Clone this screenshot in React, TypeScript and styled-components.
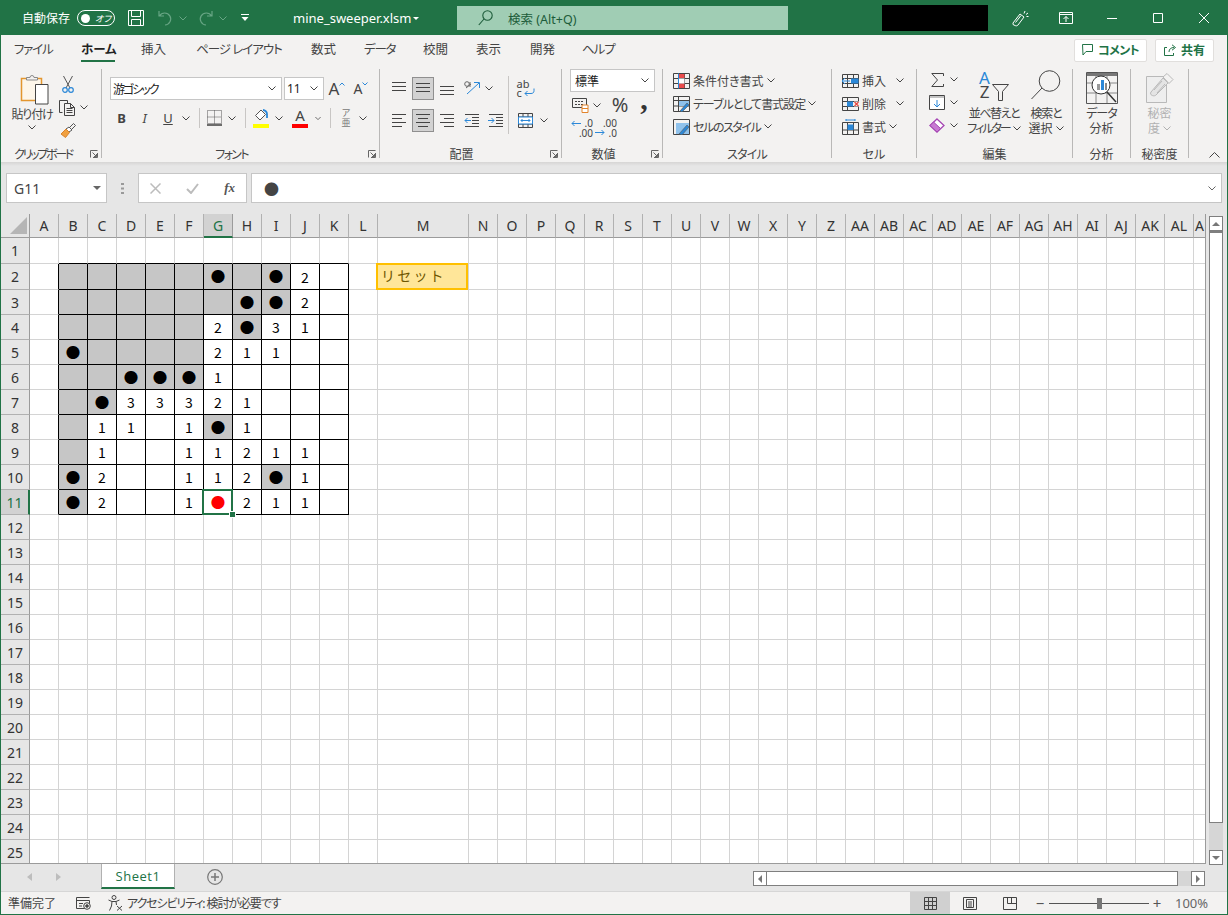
import React from "react";
import styled, { createGlobalStyle } from "styled-components";

const GREEN = "#217346";
const UI = `"Noto Sans", "Noto Sans CJK JP", sans-serif`;
const CELL = `"Noto Sans CJK JP", sans-serif`;
const BLUE = "#2b88d8";

const GlobalStyle = createGlobalStyle`
  html, body { margin: 0; padding: 0; background: #fff; overflow: hidden; }
  body { font-family: ${UI}; font-feature-settings: "palt"; color: #333; }
  * { box-sizing: border-box; }
`;

const Window = styled.div`
  width: 1228px;
  height: 915px;
  border: 1px solid ${GREEN};
  display: flex;
  flex-direction: column;
  overflow: hidden;
  background: #f3f2f1;
`;

// kana in the reference runs narrower than Noto's, this pulls a label in
const Tight = styled.span<{ $s: number }>`
  letter-spacing: ${(p) => p.$s}px;
  white-space: nowrap;
`;

/* ---------- title bar ---------- */
const TitleBar = styled.header`
  height: 34px;
  flex: none;
  background: ${GREEN};
  display: flex;
  align-items: center;
  color: #fff;
`;
const TitleItem = styled.div<{ $ml: number }>`
  margin-left: ${(p) => p.$ml}px;
  display: flex;
  align-items: center;
  flex: none;
  font-size: 12px;
  white-space: nowrap;
`;
const FileName = styled.div`
  margin-left: 44px;
  width: 118px;
  flex: none;
  font-size: 13px;
  white-space: nowrap;
`;
const Toggle = styled.div`
  width: 38px;
  height: 16px;
  border: 1px solid #fff;
  border-radius: 8px;
  display: flex;
  align-items: center;
  padding: 0 3px;
  gap: 5px;
  font-size: 9px;
  font-style: italic;
`;
const ToggleDot = styled.span`
  width: 9px;
  height: 9px;
  border-radius: 50%;
  background: #fff;
`;
const SearchBox = styled.div`
  margin-left: 38px;
  width: 331px;
  height: 24px;
  background: #a0cdb4;
  color: #1d5c3a;
  font-size: 12.5px;
  display: flex;
  align-items: center;
  padding-left: 21px;
  gap: 15px;
  flex: none;
`;
const BlackBox = styled.div`
  margin-left: 94px;
  width: 106px;
  height: 26px;
  background: #000;
  flex: none;
`;

/* ---------- tabs ---------- */
const TabBar = styled.nav`
  height: 33px;
  flex: none;
  display: flex;
  align-items: center;
  padding: 0 13px 3px;
  position: relative;
`;
const Tab = styled.div<{ $w: number; $on?: boolean; $ls: number }>`
  width: ${(p) => p.$w}px;
  flex: none;
  font-size: 12.5px;
  line-height: 18px;
  letter-spacing: ${(p) => p.$ls}px;
  white-space: nowrap;
  color: ${(p) => (p.$on ? "#222" : "#444")};
  font-weight: ${(p) => (p.$on ? 700 : 400)};
  position: relative;
`;
const TabLine = styled.span`
  position: absolute;
  left: 0;
  top: 19px;
  width: 34px;
  height: 2px;
  background: ${GREEN};
`;
const TabButtons = styled.div`
  margin-left: auto;
  display: flex;
  gap: 8px;
`;
const TabButton = styled.div<{ $w: number }>`
  width: ${(p) => p.$w}px;
  height: 23px;
  background: #fff;
  border: 1px solid #e1dfdd;
  border-radius: 2px;
  display: flex;
  align-items: center;
  justify-content: center;
  gap: 4px;
  font-size: 12px;
  font-weight: 700;
  color: ${GREEN};
`;

/* ---------- ribbon ---------- */
const Ribbon = styled.div`
  height: 94px;
  flex: none;
  display: flex;
  padding-top: 1px;
  position: relative;
`;
const Group = styled.section<{ $w: number }>`
  position: relative;
  width: ${(p) => p.$w}px;
  height: 89px;
  flex: none;
  border-right: 1px solid #b9b8b7;
  display: flex;
  flex-direction: column;
`;
const GroupBody = styled.div<{ $pl?: number; $pt?: number }>`
  height: 77px;
  padding-left: ${(p) => p.$pl ?? 0}px;
  padding-top: ${(p) => p.$pt ?? 0}px;
  display: flex;
`;
const GroupColumn = styled.div<{ $w?: number; $gap?: number; $mt?: number }>`
  display: flex;
  flex-direction: column;
  flex: none;
  gap: ${(p) => p.$gap ?? 0}px;
  margin-top: ${(p) => p.$mt ?? 0}px;
  width: ${(p) => (p.$w ? `${p.$w}px` : "auto")};
`;
const GroupLabel = styled.div<{ $pr?: number }>`
  height: 12px;
  line-height: 18px;
  padding-right: ${(p) => p.$pr ?? 0}px;
  text-align: center;
  font-size: 12px;
  color: #444;
  white-space: nowrap;
`;
const Launcher = styled.svg`
  position: absolute;
  right: 3px;
  bottom: 0;
`;
const ToolRow = styled.div<{ $h: number; $mt?: number }>`
  height: ${(p) => p.$h}px;
  margin-top: ${(p) => p.$mt ?? 0}px;
  display: flex;
  align-items: center;
  flex: none;
`;
const Slot = styled.div<{ $w: number; $pb?: number }>`
  width: ${(p) => p.$w}px;
  flex: none;
  align-self: stretch;
  display: flex;
  align-items: center;
  justify-content: center;
  color: #444;
  position: relative;
  padding-bottom: ${(p) => p.$pb ?? 0}px;
`;
const Divider = styled.span<{ $h: number; $ml?: number; $mr?: number }>`
  width: 1px;
  height: ${(p) => p.$h}px;
  background: #c8c6c4;
  flex: none;
  margin-left: ${(p) => p.$ml ?? 0}px;
  margin-right: ${(p) => p.$mr ?? 0}px;
`;
const SelectBox = styled.div<{ $w: number; $pl?: number; $ml?: number }>`
  width: ${(p) => p.$w}px;
  height: 23px;
  flex: none;
  background: #fff;
  border: 1px solid #c6c6c6;
  display: flex;
  align-items: center;
  justify-content: space-between;
  padding: 0 5px 0 ${(p) => p.$pl ?? 2}px;
  margin-left: ${(p) => p.$ml ?? 0}px;
  font-size: 12px;
  color: #222;
`;
const AlignButton = styled.div<{ $on?: boolean }>`
  width: 22px;
  height: 23px;
  margin: 0 1px;
  flex: none;
  display: flex;
  align-items: center;
  justify-content: center;
  background: ${(p) => (p.$on ? "#d2d2d2" : "transparent")};
  border: 1px solid ${(p) => (p.$on ? "#8f8f8f" : "transparent")};
`;
const StyleRow = styled.div`
  height: 23px;
  display: flex;
  align-items: center;
  gap: 3px;
  font-size: 12px;
  color: #444;
  white-space: nowrap;
`;
const BigTool = styled.div<{ $w: number; $dim?: boolean }>`
  width: ${(p) => p.$w}px;
  flex: none;
  display: flex;
  flex-direction: column;
  align-items: center;
  font-size: 12px;
  line-height: 15px;
  color: ${(p) => (p.$dim ? "#b1b1b1" : "#444")};
  white-space: nowrap;
`;
const BigIcon = styled.div<{ $h: number; $ml?: number }>`
  height: ${(p) => p.$h}px;
  margin-left: ${(p) => p.$ml ?? 0}px;
  display: flex;
  align-items: center;
  justify-content: center;
`;
const BigText = styled.span<{ $mt?: number }>`
  margin-top: ${(p) => p.$mt ?? 0}px;
  display: flex;
  align-items: center;
  gap: 3px;
`;
const Letter = styled.span<{ $size?: number; $bold?: boolean; $italic?: boolean; $under?: boolean }>`
  font-size: ${(p) => p.$size ?? 13}px;
  font-weight: ${(p) => (p.$bold ? 700 : 400)};
  font-style: ${(p) => (p.$italic ? "italic" : "normal")};
  text-decoration: ${(p) => (p.$under ? "underline" : "none")};
  color: #444;
  line-height: 1;
`;
const CommaMark = styled.span`
  font-family: "Liberation Serif", serif;
  font-weight: 700;
  font-size: 30px;
  line-height: 1;
  color: #333;
  margin-bottom: 12px;
`;
const ColorBar = styled.span<{ $c: string }>`
  position: absolute;
  left: 50%;
  margin-left: -8px;
  bottom: 4px;
  width: 16px;
  height: 4px;
  background: ${(p) => p.$c};
`;
const Caret = styled.span`
  margin-bottom: 10px;
  display: flex;
`;
const RubyStack = styled.div`
  display: flex;
  flex-direction: column;
  align-items: center;
  line-height: 10px;
  font-size: 9px;
  color: #777;
`;
const WrapMark = styled.div`
  position: relative;
  width: 18px;
  font-size: 11px;
  line-height: 9px;
  color: #444;
`;
const WrapArrow = styled.svg`
  position: absolute;
  right: 0;
  bottom: 0;
`;
const DecimalIcon = styled.div`
  position: relative;
  width: 22px;
  height: 20px;
  font-size: 10px;
  line-height: 10px;
  color: #444;
  text-align: right;
`;
const DecimalArrow = styled.svg<{ $low?: boolean }>`
  position: absolute;
  left: 0;
  top: ${(p) => (p.$low ? 11 : 2)}px;
`;
const SortMark = styled.div`
  display: flex;
  flex-direction: column;
  align-items: center;
  font-size: 17px;
  line-height: 14px;
  color: #444;
  margin-right: 2px;
`;
const SortA = styled.span`
  color: ${BLUE};
`;
const FunnelBox = styled.div`
  align-self: flex-end;
  display: flex;
`;
const CollapseArrow = styled.svg`
  position: absolute;
  right: 7px;
  bottom: 4px;
`;

/* ---------- formula bar ---------- */
const FormulaBar = styled.div`
  height: 52px;
  flex: none;
  background: linear-gradient(#d6d5d4 0, #e6e6e6 4px);
  display: flex;
  padding: 11px 5px 0 5px;
  align-items: flex-start;
`;
const NameBox = styled.div`
  width: 101px;
  height: 30px;
  background: #fff;
  border: 1px solid #c6c6c6;
  display: flex;
  align-items: center;
  justify-content: space-between;
  padding: 0 5px 0 7px;
  font-size: 14px;
  color: #444;
  flex: none;
`;
const Dots = styled.div`
  width: 31px;
  height: 30px;
  flex: none;
  display: flex;
  align-items: center;
  justify-content: center;
`;
const FxBox = styled.div`
  width: 109px;
  height: 30px;
  flex: none;
  background: #fff;
  border: 1px solid #c6c6c6;
  display: flex;
  align-items: center;
  padding: 0 11px;
  justify-content: space-between;
`;
const FxLabel = styled.span`
  font-family: "Liberation Serif", serif;
  font-style: italic;
  font-weight: 700;
  font-size: 13px;
  color: #555;
`;
const FormulaInput = styled.div`
  margin-left: 4px;
  flex: 1;
  height: 30px;
  background: #fff;
  border: 1px solid #c6c6c6;
  display: flex;
  align-items: center;
  justify-content: space-between;
  padding: 0 5px 0 12px;
  font-family: ${CELL};
  font-size: 15px;
  color: #444;
`;

/* ---------- sheet ---------- */
const SheetArea = styled.div`
  height: 651px;
  flex: none;
  display: flex;
  align-items: flex-start;
  background: #e6e6e6;
`;
const COLUMN_TEMPLATE = `29px repeat(12, 29px) 91px repeat(25, 29px) 12px`;
const ROW_TEMPLATE = `24px 26px 26px repeat(22, 25px) 25px`;
const SheetGrid = styled.div`
  width: 1205px;
  height: 650px;
  flex: none;
  display: grid;
  grid-template-columns: ${COLUMN_TEMPLATE};
  grid-template-rows: ${ROW_TEMPLATE};
  background: #fff;
  overflow: hidden;
  border-right: 1px solid #9b9b9b;
  border-bottom: 1px solid #9b9b9b;
`;
const Corner = styled.div`
  background: #e6e6e6;
  border-right: 1px solid #9b9b9b;
  border-bottom: 1px solid #9b9b9b;
  display: flex;
  align-items: flex-end;
  justify-content: flex-end;
  padding: 0 2px 3px 0;
`;
const ColHead = styled.div<{ $on?: boolean }>`
  background: ${(p) => (p.$on ? "#d2d2d2" : "#e6e6e6")};
  border-right: 1px solid ${(p) => (p.$on ? "#9b9b9b" : "#b1b1b1")};
  border-bottom: ${(p) => (p.$on ? `2px solid ${GREEN}` : "1px solid #9b9b9b")};
  color: ${(p) => (p.$on ? GREEN : "#333")};
  font-size: 14px;
  line-height: 24px;
  text-align: center;
  overflow: hidden;
  white-space: nowrap;
`;
const RowHead = styled.div<{ $on?: boolean }>`
  background: ${(p) => (p.$on ? "#d2d2d2" : "#e6e6e6")};
  border-right: ${(p) => (p.$on ? `2px solid ${GREEN}` : "1px solid #9b9b9b")};
  border-bottom: 1px solid #b1b1b1;
  color: ${(p) => (p.$on ? GREEN : "#333")};
  font-size: 14px;
  display: flex;
  align-items: center;
  justify-content: center;
`;
const Cell = styled.div<{ $right?: boolean; $bottom?: boolean; $gray?: boolean }>`
  position: relative;
  background: ${(p) => (p.$gray ? "#c6c6c6" : "#fff")};
  border-right: 1px solid ${(p) => (p.$right ? "#000" : "#d4d4d4")};
  border-bottom: 1px solid ${(p) => (p.$bottom ? "#000" : "#d4d4d4")};
  font-family: ${CELL};
  font-feature-settings: normal;
  font-size: 14px;
  color: #000;
  display: flex;
  align-items: center;
  justify-content: center;
`;
const Mine = styled.span<{ $red?: boolean }>`
  font-size: 14.5px;
  line-height: 1;
  color: ${(p) => (p.$red ? "#ff0000" : "#000")};
`;
const ResetShape = styled.div`
  position: absolute;
  left: -2px;
  top: -1px;
  right: 0;
  bottom: -1px;
  background: #ffe699;
  border: 2px solid #ffc000;
  color: #6e5600;
  font-size: 14px;
  letter-spacing: 2.2px;
  display: flex;
  align-items: center;
  padding: 0 0 3px 3px;
  z-index: 1;
`;
const Selection = styled.div`
  position: absolute;
  left: -2px;
  top: -1px;
  right: -1px;
  bottom: -1px;
  border: 2px solid ${GREEN};
  z-index: 2;
`;
const FillHandle = styled.span`
  position: absolute;
  right: -4px;
  bottom: -4px;
  width: 5px;
  height: 5px;
  background: ${GREEN};
  outline: 1px solid #fff;
`;

const VScroll = styled.div`
  width: 21px;
  height: 651px;
  flex: none;
  display: flex;
  flex-direction: column;
  padding: 2px 4px 0 3px;
`;
const ScrollButton = styled.div<{ $w?: number }>`
  width: ${(p) => p.$w ?? 14}px;
  height: 15px;
  flex: none;
  background: #fff;
  border: 1px solid #7f7f7f;
  display: flex;
  align-items: center;
  justify-content: center;
`;
const VThumb = styled.div`
  width: 14px;
  height: 592px;
  flex: none;
  background: #fff;
  border: 1px solid #7f7f7f;
  border-top-width: 2px;
`;
const VTrack = styled.div`
  flex: 1;
  background: #d6d6d6;
`;

/* ---------- sheet tabs ---------- */
const SheetBar = styled.div`
  height: 27px;
  flex: none;
  background: #e6e6e6;
  display: flex;
  align-items: flex-start;
  border-bottom: 1px solid #d6d6d6;
`;
const NavArrows = styled.div`
  width: 100px;
  height: 25px;
  display: flex;
  align-items: center;
  padding-left: 26px;
  gap: 24px;
  margin-top: -1px;
`;
const SheetTab = styled.div`
  width: 74px;
  height: 25px;
  margin-top: -1px;
  background: #fff;
  border-left: 1px solid #b1b1b1;
  border-right: 1px solid #b1b1b1;
  border-bottom: 2px solid ${GREEN};
  color: ${GREEN};
  font-size: 13px;
  letter-spacing: 0.5px;
  text-align: center;
  line-height: 24px;
  font-family: "Open Sans", sans-serif;
`;
const AddSheet = styled.div`
  margin: -1px 0 0 32px;
  height: 25px;
  display: flex;
  align-items: center;
`;
const HScroll = styled.div`
  margin-left: auto;
  margin-right: 22px;
  margin-top: 6px;
  display: flex;
  height: 15px;
`;
const HThumb = styled.div`
  width: 411px;
  height: 15px;
  background: #fff;
  border: 1px solid #7f7f7f;
  border-left-width: 0;
`;
const HTrack = styled.div`
  width: 13px;
  height: 15px;
  background: #d6d6d6;
`;

/* ---------- status bar ---------- */
const StatusBar = styled.footer`
  flex: 1;
  display: flex;
  align-items: center;
  font-size: 12px;
  color: #444;
  padding-left: 7px;
`;
const StatusIcon = styled.span<{ $ml: number }>`
  margin-left: ${(p) => p.$ml}px;
  display: flex;
  align-items: center;
  gap: 4px;
`;
const StatusRight = styled.div`
  margin-left: auto;
  display: flex;
  align-items: center;
  height: 100%;
`;
const ViewButton = styled.div<{ $on?: boolean }>`
  width: 40px;
  height: 100%;
  display: flex;
  align-items: center;
  justify-content: center;
  background: ${(p) => (p.$on ? "#d0d0d0" : "transparent")};
`;
const ZoomSlider = styled.div`
  width: 100px;
  height: 1px;
  background: #555;
  position: relative;
  margin: 0 2px 0 3px;
`;
const ZoomThumb = styled.span`
  position: absolute;
  left: 48px;
  top: -5px;
  width: 5px;
  height: 11px;
  background: #777;
`;
const ZoomSign = styled.span<{ $ml?: number }>`
  font-size: 15px;
  color: #555;
  width: 12px;
  text-align: center;
  margin-left: ${(p) => p.$ml ?? 0}px;
`;
const ZoomValue = styled.span`
  width: 32px;
  margin: 0 20px 0 12px;
  font-size: 13px;
  color: #666;
  white-space: nowrap;
`;

/* ---------- icons ---------- */
const Chev = ({ c = "#444" }: { c?: string }) => (
  <svg width="8" height="5" viewBox="0 0 8 5" fill="none" stroke={c}>
    <path d="M.5.500 4 4 7.500.500" />
  </svg>
);
const LaunchIcon = () => (
  <Launcher width="8" height="8" viewBox="0 0 8 8" fill="none" stroke="#666">
    <path d="M.5 7.500V.500h7M7.500 3v4.500H3M2.500 2.500l4 4M6.500 4v2.500H4" />
  </Launcher>
);
const SaveIcon = () => (
  <svg width="16" height="16" viewBox="0 0 16 16" fill="none" stroke="#fff">
    <path d="M.5.500h15v15H.5zM3.500.500v6h9v-6M3.500 15.500v-6h9v6" />
  </svg>
);
const UndoIcon = ({ flip }: { flip?: boolean }) => (
  <svg width="15" height="16" viewBox="0 0 15 16" fill="none" stroke="#67a584" strokeWidth="1.2" transform={flip ? "scale(-1 1)" : undefined}>
    <path d="M1 1v5h5M1.500 6A6 6 0 1 1 7 15" />
  </svg>
);
const CustomizeIcon = () => (
  <svg width="8" height="8" viewBox="0 0 8 8" fill="#fff">
    <path d="M0 0h8v1H0zM.5 3h7L4 7z" />
  </svg>
);
const SmallDown = () => (
  <svg width="6" height="3" viewBox="0 0 6 3" fill="#fff"><path d="M0 0h6L3 3z" /></svg>
);
const SearchIcon = () => (
  <svg width="15" height="16" viewBox="0 0 15 16" fill="none" stroke="#1d5c3a" strokeWidth="1.1">
    <circle cx="9.500" cy="5.500" r="4.700" />
    <path d="M6 9 .8 15" />
  </svg>
);
const PenIcon = () => (
  <svg width="17" height="17" viewBox="0 0 17 17" fill="none" stroke="#fff">
    <path d="M1 13 8 4l4 3-6 8c-1 1-2 1-3 .5L1 14.500zM9 5.500l-5.500 7M13 1l-1 2.500M16 3l-2 1.500M16.500 6.500h-2" />
  </svg>
);
const RibbonDisplayIcon = () => (
  <svg width="14" height="12" viewBox="0 0 14 12" fill="none" stroke="#fff">
    <path d="M.5.500h13v11H.5zM.5 2.500h13M7 10V4.500M4.500 7 7 4.500 9.500 7" />
  </svg>
);
const MinIcon = () => (
  <svg width="10" height="1" viewBox="0 0 10 1" stroke="#fff"><path d="M0 .5h10" /></svg>
);
const MaxIcon = () => (
  <svg width="10" height="10" viewBox="0 0 10 10" fill="none" stroke="#fff"><path d="M.5.500h9v9h-9z" /></svg>
);
const CloseIcon = () => (
  <svg width="10" height="10" viewBox="0 0 10 10" fill="none" stroke="#fff"><path d="m0 0 10 10M10 0 0 10" /></svg>
);
const CommentIcon = () => (
  <svg width="12" height="12" viewBox="0 0 12 12" fill="none" stroke={GREEN}>
    <path d="M.5.500h10v7H4l-3 3.500z" />
  </svg>
);
const ShareIcon = () => (
  <svg width="13" height="12" viewBox="0 0 13 12" fill="none" stroke={GREEN}>
    <path d="M3 3.500H.5v8h9V9M5 8c0-3 2-4.500 5-4.500M8 .8l3.500 2.700L8 6.200" />
  </svg>
);
const PasteIcon = () => (
  <svg width="29" height="31" viewBox="0 0 29 31" fill="none">
    <path d="M1.500 4.500h20v22h-20z" fill="#fdf6ea" stroke="#e3962f" strokeWidth="1.500" />
    <path d="M6.500 6V3.500h3.500a2 2 0 0 1 4 0h3.500V6z" fill="#f3f2f1" stroke="#8a8a8a" />
    <path d="M15.500 10.500h12.500v19.500H15.500z" fill="#fff" stroke="#444" />
  </svg>
);
const ScissorsIcon = () => (
  <svg width="12" height="17" viewBox="0 0 12 17" fill="none">
    <path d="M1.500 0 8 12M10.500 0 4 12" stroke="#555" />
    <circle cx="3" cy="14" r="2.300" stroke={BLUE} strokeWidth="1.200" />
    <circle cx="9" cy="14" r="2.300" stroke={BLUE} strokeWidth="1.200" />
  </svg>
);
const CopyIcon = () => (
  <svg width="17" height="16" viewBox="0 0 17 16" fill="none" stroke="#444">
    <path d="M3.500 12.500H.5v-12h8v3" />
    <path d="M5.500 3.500h6l4 4v8h-10zM7.500 8.500h6M7.500 10.500h6M7.500 12.500h6M11.500 3.500v4h4" />
  </svg>
);
const BrushIcon = () => (
  <svg width="16" height="16" viewBox="0 0 16 16" fill="none">
    <path d="M9 4l3 3-3 2-3-3z" fill="#fff" stroke="#555" />
    <path d="M10 4l3.500-3.500 2 2L12 6" stroke="#555" />
    <path d="M6 6l3.500 3.500-4 5L1 11z" fill="#f0a040" stroke="#d9822b" />
  </svg>
);
const CaretUp = () => (
  <svg width="6" height="4" viewBox="0 0 6 4" fill="none" stroke={BLUE}><path d="M.5 3.500 3 1l2.500 2.500" /></svg>
);
const CaretDown = () => (
  <svg width="6" height="4" viewBox="0 0 6 4" fill="none" stroke={BLUE}><path d="M.5.500 3 3 5.500.500" /></svg>
);
const BorderIcon = () => (
  <svg width="15" height="16" viewBox="0 0 15 16" fill="none">
    <path d="M.5.500h14v13H.5zM.5 7h14M7.500.500v13" stroke="#555" strokeDasharray="1 1" />
    <path d="M0 15h15" stroke="#111" strokeWidth="1.200" />
  </svg>
);
const FillIcon = () => (
  <svg width="15" height="13" viewBox="0 0 15 13" fill="none">
    <path d="M7 1 1.500 6.500l4.500 4.500 5.500-5.500z" stroke="#555" fill="#fff" />
    <path d="M9 1c2 0 4 2 4 4v4" stroke={BLUE} strokeWidth="1.800" />
  </svg>
);
const AlignIcon = ({ lines }: { lines: [number, number, number][] }) => (
  <svg width="16" height="16" viewBox="0 0 16 16" stroke="#444">
    {lines.map(([a, b, y], i) => (
      <path key={i} d={`M${a} ${y + 0.5}H${b}`} />
    ))}
  </svg>
);
const OrientIcon = () => (
  <svg width="18" height="14" viewBox="0 0 18 14" fill="none">
    <path d="M4 13 16 2M11 1.500h5.500V7" stroke={BLUE} />
    <circle cx="4" cy="3" r="2.300" stroke="#666" />
    <path d="M3 7l5-4M7 1v5" stroke="#666" />
  </svg>
);
const IndentIcon = ({ inc }: { inc?: boolean }) => (
  <svg width="15" height="13" viewBox="0 0 15 13" fill="none">
    <path d={inc ? "M0 6.500h6M3.500 4l2.500 2.500L3.500 9" : "M1 6.500h6M3.500 4 1 6.500 3.500 9"} stroke={BLUE} />
    <path d="M8 3.500h7M8 6.500h7M8 9.500h7M1 .5h14M1 12.500h14" stroke="#444" />
  </svg>
);
const WrapIcon = () => (
  <WrapMark>
    <div>ab</div>
    <div>c</div>
    <WrapArrow width="11" height="9" viewBox="0 0 11 9" fill="none" stroke={BLUE}>
      <path d="M10 .5v2c0 2-1 3-3 3H1M3.500 3 1 5.500 3.500 8" />
    </WrapArrow>
  </WrapMark>
);
const MergeIcon = () => (
  <svg width="15" height="15" viewBox="0 0 15 15" fill="none">
    <path d="M.5.500h14v14H.5zM.5 4h14M.5 11h14M5 11v3.500M10 11v3.500M5 .5V4M10 .5V4" stroke="#444" />
    <path d="M.5 4h14v7H.5z" fill="#fff" stroke={BLUE} />
    <path d="M3 7.500h9M4.500 6 3 7.500 4.500 9M10.500 6 12 7.500 10.500 9" stroke={BLUE} />
  </svg>
);
const CurrencyIcon = () => (
  <svg width="17" height="15" viewBox="0 0 17 15" fill="none">
    <path d="M.5.500h14v9H.5z" stroke="#444" />
    <path d="M3 3.500h8M3 6.500h8" stroke="#444" strokeDasharray="2 1" />
    <path d="M10 7h6v7.500h-6zM10 10.500h6" fill="#fff" stroke="#e3842b" />
  </svg>
);
const TinyArrow = ({ right }: { right?: boolean }) => (
  <DecimalArrow $low={right} width="10" height="7" viewBox="0 0 10 7" fill="none" stroke={BLUE}>
    <path d={right ? "M0 3.500h9M6.500 1 9 3.500 6.500 6" : "M1 3.500h9M3.500 1 1 3.500 3.500 6"} />
  </DecimalArrow>
);
const TableBase = ({ children }: { children: React.ReactNode }) => (
  <svg width="17" height="16" viewBox="0 0 17 16" fill="none">
    {children}
  </svg>
);
const CondIcon = () => (
  <TableBase>
    <path d="M.5.500h16v15H.5zM5.500.500v15M11.500.500v15M.5 5.500h16M.5 10.500h16" stroke="#444" />
    <path d="M6 1h5.500v4H6zM6 10.500h5.500V15H6z" fill="#ea4b4b" />
    <path d="M6 5.500h5.500v5H6z" fill="#fff" />
    <path d="M5.500.5v15" stroke={BLUE} />
  </TableBase>
);
const TableIcon = () => (
  <TableBase>
    <path d="M.5.500h16v15H.5zM.5 4.500h16M5.500.500v15M.5 10h16" stroke="#444" />
    <path d="M6 5h10v5H6z" fill="#8fc2ec" />
    <path d="M7 15 14 7l2 2-7 7z" fill={BLUE} stroke="#555" strokeWidth=".6" />
  </TableBase>
);
const StyleIcon = () => (
  <TableBase>
    <path d="M.5.500h16v15H.5z" stroke="#444" />
    <path d="M3 4h13v11H3z" fill="#8fc2ec" />
    <path d="M6 15l8-9 2 2-7 8z" fill={BLUE} stroke="#555" strokeWidth=".6" />
  </TableBase>
);
const InsertIcon = () => (
  <TableBase>
    <path d="M.5 1.500h16v13H.5zM.5 5.500h16M.5 10.500h16M5.500 1.500v13M11.500 1.500v13" stroke="#444" />
    <path d="M9 5.500h7.500v5H9z" fill={BLUE} />
    <path d="M0 8h8M3 5 0 8l3 3" stroke={BLUE} fill="#f3f2f1" />
  </TableBase>
);
const DeleteIcon = () => (
  <TableBase>
    <path d="M.5 1.500h16v13H.5zM.5 5.500h16M.5 10.500h16M5.500 1.500v13" stroke="#444" />
    <path d="M5 5.500h6v5H5z" fill={BLUE} />
    <path d="M12 5.500h5v5h-5z" fill="#f3f2f1" />
    <path d="m12.500 6 4 4M16.500 6l-4 4" stroke="#e8483f" strokeWidth="1.200" />
  </TableBase>
);
const FormatIcon = () => (
  <TableBase>
    <path d="M.5 3.500h16v12H.5zM.5 11h16M5.500 3.500v12M11.500 3.500v12" stroke="#444" />
    <path d="M5.500 5.500h6v5.500h-6z" fill={BLUE} />
    <path d="M4 1h9M4 0v2M13 0v2" stroke={BLUE} />
  </TableBase>
);
const SigmaIcon = () => (
  <svg width="13" height="14" viewBox="0 0 13 14" fill="none" stroke="#444">
    <path d="M12.500 3V.5H.8L6.500 7 .8 13.500h11.700V11" />
  </svg>
);
const FillDownIcon = () => (
  <svg width="16" height="15" viewBox="0 0 16 15" fill="none">
    <path d="M.5.500h15v14H.5z" fill="#fff" stroke="#444" />
    <path d="M.5 2h15" stroke="#888" />
    <path d="M8 5v7M5 9l3 3 3-3" stroke={BLUE} />
  </svg>
);
const EraserIcon = () => (
  <svg width="16" height="15" viewBox="0 0 16 15" fill="none">
    <path d="M8 1 15 7.500 8 14 1 7.500z" fill="#fff" stroke="#a646b4" strokeWidth="1.300" />
    <path d="M1 7.500 4.500 4 11.500 10.500 8 14z" fill="#c77ad2" stroke="#a646b4" />
  </svg>
);
const FunnelIcon = () => (
  <svg width="17" height="17" viewBox="0 0 17 17" fill="none" stroke="#444">
    <path d="M.5.500h16l-6 7v9h-4v-9z" />
  </svg>
);
const MagnifierIcon = () => (
  <svg width="30" height="30" viewBox="0 0 30 30" fill="none" stroke="#444">
    <circle cx="18.500" cy="11" r="10.300" />
    <path d="M11 18 .5 29" />
  </svg>
);
const AnalysisIcon = () => (
  <svg width="32" height="32" viewBox="0 0 32 32" fill="none">
    <path d="M.5.500h31v31H.5z" stroke="#555" fill="#f3f2f1" />
    <path d="M1 1h30v3H1z" fill="#777" />
    <path d="M10 4v27M21 4v27M1 11h30M1 21h30" stroke="#888" />
    <circle cx="15" cy="13" r="9" fill="#fff" stroke="#333" />
    <path d="M11 12h3v6h-3z" fill="#999" />
    <path d="M15 8h3v10h-3z" fill={BLUE} />
    <path d="M19 11h2v7h-2z" fill="#888" />
    <path d="m21 20 9 10" stroke="#333" strokeWidth="1.500" />
  </svg>
);
const SensitivityIcon = () => (
  <svg width="28" height="30" viewBox="0 0 28 30" fill="none" stroke="#b9b9b9">
    <path d="M.5 3.500h20v26H.5z" fill="#eeeeee" />
    <path d="M5 19 17 5l5 5-12 12c-2 2-7 0-5-3z" fill="#e4e4e4" />
    <path d="m8 17 8-9M11 20l8-9" />
    <path d="M17 4l4-3.500 6 6-4 4z" fill="#f3f2f1" />
  </svg>
);
const CollapseIcon = () => (
  <CollapseArrow width="11" height="6" viewBox="0 0 11 6" fill="none" stroke="#444">
    <path d="m.5 5.500 5-5 5 5" />
  </CollapseArrow>
);
const DropTriangle = ({ c = "#666" }: { c?: string }) => (
  <svg width="8" height="4" viewBox="0 0 8 4" fill={c}><path d="M0 0h8L4 4z" /></svg>
);
const DotsIcon = () => (
  <svg width="3" height="11" viewBox="0 0 3 11" fill="#999"><path d="M0 0h3v2H0zM0 4.500h3v2H0zM0 9h3v2H0z" /></svg>
);
const CancelIcon = () => (
  <svg width="11" height="11" viewBox="0 0 11 11" fill="none" stroke="#bcbcbc" strokeWidth="1.500"><path d="m.5.500 10 10M10.500.500l-10 10" /></svg>
);
const CheckIcon = () => (
  <svg width="13" height="11" viewBox="0 0 13 11" fill="none" stroke="#bcbcbc" strokeWidth="2"><path d="m1 6 4 4 7-9" /></svg>
);
const CornerTriangle = () => (
  <svg width="17" height="17" viewBox="0 0 17 17" fill="#b5b5b5"><path d="M17 0v17H0z" /></svg>
);
const NavArrow = ({ right }: { right?: boolean }) => (
  <svg width="5" height="8" viewBox="0 0 5 8" fill="#bdbdbd"><path d={right ? "M0 0l5 4-5 4z" : "M5 0 0 4l5 4z"} /></svg>
);
const AddIcon = () => (
  <svg width="16" height="16" viewBox="0 0 16 16" fill="none" stroke="#777">
    <circle cx="8" cy="8" r="7.300" strokeWidth="1.200" />
    <path d="M8 4v8M4 8h8" strokeWidth="1.500" />
  </svg>
);
const ScrollTri = ({ d }: { d: string }) => (
  <svg width="8" height="8" viewBox="0 0 8 8" fill="#777"><path d={d} /></svg>
);
const MacroIcon = () => (
  <svg width="15" height="13" viewBox="0 0 15 13" fill="none" stroke="#444">
    <path d="M.5.500h13M.5.500v11h8M.5 3.500h13v3M3 6.500h4M3 9h3" />
    <circle cx="11" cy="9" r="3.300" />
    <circle cx="11" cy="9" r="1.300" fill="#444" />
  </svg>
);
const AccessIcon = () => (
  <svg width="15" height="16" viewBox="0 0 15 16" fill="none" stroke="#444">
    <circle cx="6" cy="2.500" r="2" />
    <path d="M.5 5 4 6.500h4l3.500-1.500M4 6.500 3.500 11l-2 4.500M8 6.500 8.500 10" />
    <path d="m9 11 5 4.500M14 11l-5 4.500" />
  </svg>
);
const ViewNormal = () => (
  <svg width="13" height="13" viewBox="0 0 13 13" fill="none" stroke="#444"><path d="M.5.500h12v12H.5zM4.500.500v12M8.500.500v12M.5 4.500h12M.5 8.500h12" /></svg>
);
const ViewPage = () => (
  <svg width="14" height="13" viewBox="0 0 14 13" fill="none" stroke="#444"><path d="M.5.500h13v12H.5zM3.500 2.500h7v8h-7zM5 5h4M5 7h4M5 9h4" /></svg>
);
const ViewBreak = () => (
  <svg width="14" height="13" viewBox="0 0 14 13" fill="none" stroke="#444"><path d="M.5.500h13v12H.5zM4.500.500v6h9M8.500.500v6" /></svg>
);

/* ---------- data ---------- */
const COLUMNS = [
  ..."ABCDEFGHIJKLMNOPQRSTUVWXYZ".split(""),
  ..."ABCDEFGHIJKL".split("").map((c) => `A${c}`),
  "A",
];
const ROWS = Array.from({ length: 25 }, (_, i) => i + 1);
// B2:K11; g = closed, * = mine, R = exploded, . = opened and empty
const BOARD = [
  "ggggg*g*2.",
  "gggggg**2.",
  "ggggg2*31.",
  "*gggg211..",
  "gg***1....",
  "g*33321...",
  "g11.1*1...",
  "g1..11211.",
  "*2..112*1.",
  "*2..1R211.",
];

const boardAt = (row: number, col: number) => {
  if (row < 2 || row > 11 || col < 1 || col > 10) return null;
  return BOARD[row - 2][col - 1];
};

const SheetCell = ({ row, col }: { row: number; col: number }) => {
  const v = boardAt(row, col);
  const right = row >= 2 && row <= 11 && col >= 0 && col <= 10;
  const bottom = row >= 1 && row <= 11 && col >= 1 && col <= 10;
  const gray = v === "g" || v === "*";
  return (
    <Cell $right={right} $bottom={bottom} $gray={gray}>
      {v === "*" && <Mine>●</Mine>}
      {v === "R" && <Mine $red>●</Mine>}
      {v && /\d/.test(v) && v}
      {v === "R" && (
        <Selection>
          <FillHandle />
        </Selection>
      )}
      {row === 2 && col === 12 && <ResetShape>リセット</ResetShape>}
    </Cell>
  );
};

const TABS: [string, number, number][] = [
  ["ファイル", 67, -1.2],
  ["ホーム", 60, 0],
  ["挿入", 55, 0],
  ["ページ レイアウト", 115, -1],
  ["数式", 53, 0],
  ["データ", 59, -1.2],
  ["校閲", 53, 0],
  ["表示", 54, 0],
  ["開発", 52, 0],
  ["ヘルプ", 40, -1],
];

export default function App() {
  return (
    <Window>
      <GlobalStyle />
      <TitleBar>
        <TitleItem $ml={21}>自動保存</TitleItem>
        <TitleItem $ml={7}>
          <Toggle>
            <ToggleDot />
            オフ
          </Toggle>
        </TitleItem>
        <TitleItem $ml={13}><SaveIcon /></TitleItem>
        <TitleItem $ml={14}><UndoIcon /></TitleItem>
        <TitleItem $ml={6}><Chev c="#67a584" /></TitleItem>
        <TitleItem $ml={11}><UndoIcon flip /></TitleItem>
        <TitleItem $ml={6}><Chev c="#67a584" /></TitleItem>
        <TitleItem $ml={14}><CustomizeIcon /></TitleItem>
        <FileName>mine_sweeper.xlsm</FileName>
        <TitleItem $ml={2}><SmallDown /></TitleItem>
        <SearchBox>
          <SearchIcon />
          検索 (Alt+Q)
        </SearchBox>
        <BlackBox />
        <TitleItem $ml={24}><PenIcon /></TitleItem>
        <TitleItem $ml={30}><RibbonDisplayIcon /></TitleItem>
        <TitleItem $ml={34}><MinIcon /></TitleItem>
        <TitleItem $ml={36}><MaxIcon /></TitleItem>
        <TitleItem $ml={36}><CloseIcon /></TitleItem>
      </TitleBar>

      <TabBar>
        {TABS.map(([name, w, ls]) => (
          <Tab key={name} $w={w} $ls={ls} $on={name === "ホーム"}>
            {name}
            {name === "ホーム" && <TabLine />}
          </Tab>
        ))}
        <TabButtons>
          <TabButton $w={73}><CommentIcon /><Tight $s={-0.7}>コメント</Tight></TabButton>
          <TabButton $w={59}><ShareIcon />共有</TabButton>
        </TabButtons>
      </TabBar>

      <Ribbon>
        <Group $w={101}>
          <GroupBody $pl={5} $pt={5}>
            <BigTool $w={52}>
              <BigIcon $h={31} $ml={5}><PasteIcon /></BigIcon>
              <BigText $mt={2}><Tight $s={-1.2}>貼り付け</Tight></BigText>
              <BigText $mt={3}><Chev /></BigText>
            </BigTool>
            <GroupColumn $mt={-2}>
              <ToolRow $h={24}><Slot $w={19}><ScissorsIcon /></Slot></ToolRow>
              <ToolRow $h={23}><Slot $w={19}><CopyIcon /></Slot><Slot $w={14}><Chev /></Slot></ToolRow>
              <ToolRow $h={23}><Slot $w={19}><BrushIcon /></Slot></ToolRow>
            </GroupColumn>
          </GroupBody>
          <GroupLabel $pr={16}><Tight $s={-2.3}>クリップボード</Tight></GroupLabel>
          <LaunchIcon />
        </Group>

        <Group $w={278}>
          <GroupBody $pl={8} $pt={8}>
            <GroupColumn $gap={4}>
              <ToolRow $h={23}>
                <SelectBox $w={172}><Tight $s={-2}>游ゴシック</Tight><Chev /></SelectBox>
                <SelectBox $w={40} $ml={2}>11<Chev /></SelectBox>
                <Slot $w={26}><Letter $size={17}>A</Letter><Caret><CaretUp /></Caret></Slot>
                <Slot $w={22}><Letter $size={14}>A</Letter><Caret><CaretDown /></Caret></Slot>
              </ToolRow>
              <ToolRow $h={28}>
                <Slot $w={23}><Letter $bold>B</Letter></Slot>
                <Slot $w={23}><Letter $italic>I</Letter></Slot>
                <Slot $w={24}><Letter $under>U</Letter></Slot>
                <Slot $w={12}><Chev /></Slot>
                <Slot $w={14}><Divider $h={20} /></Slot>
                <Slot $w={17}><BorderIcon /></Slot>
                <Slot $w={18}><Chev /></Slot>
                <Slot $w={8}><Divider $h={20} /></Slot>
                <Slot $w={24} $pb={6}><FillIcon /><ColorBar $c="#ffff00" /></Slot>
                <Slot $w={12}><Chev /></Slot>
                <Slot $w={30} $pb={6}><Letter $size={15}>A</Letter><ColorBar $c="#ff0000" /></Slot>
                <Slot $w={6}><Chev /></Slot>
                <Slot $w={18}><Divider $h={20} /></Slot>
                <Slot $w={14}><RubyStack><span>ア</span><span>亜</span></RubyStack></Slot>
                <Slot $w={20}><Chev /></Slot>
              </ToolRow>
            </GroupColumn>
          </GroupBody>
          <GroupLabel $pr={18}><Tight $s={-1.7}>フォント</Tight></GroupLabel>
          <LaunchIcon />
        </Group>

        <Group $w={182}>
          <GroupBody $pl={7} $pt={7}>
            <GroupColumn $gap={8} $w={121}>
              <ToolRow $h={24}>
                <AlignButton><AlignIcon lines={[[1, 15, 2], [1, 15, 6], [1, 15, 10]]} /></AlignButton>
                <AlignButton $on><AlignIcon lines={[[1, 15, 3], [1, 15, 7], [1, 15, 11]]} /></AlignButton>
                <AlignButton><AlignIcon lines={[[1, 15, 6], [1, 15, 10], [1, 15, 14]]} /></AlignButton>
                <Slot $w={25}><OrientIcon /></Slot>
                <Slot $w={10}><Chev /></Slot>
              </ToolRow>
              <ToolRow $h={24}>
                <AlignButton><AlignIcon lines={[[1, 15, 2], [1, 11, 6], [1, 15, 10], [1, 11, 14]]} /></AlignButton>
                <AlignButton $on><AlignIcon lines={[[1, 15, 2], [3, 13, 6], [1, 15, 10], [3, 13, 14]]} /></AlignButton>
                <AlignButton><AlignIcon lines={[[1, 15, 2], [5, 15, 6], [1, 15, 10], [5, 15, 14]]} /></AlignButton>
                <Slot $w={24}><IndentIcon /></Slot>
                <Slot $w={24}><IndentIcon inc /></Slot>
              </ToolRow>
            </GroupColumn>
            <Divider $h={58} $mr={5} />
            <GroupColumn $gap={8}>
              <ToolRow $h={24}><Slot $w={23}><WrapIcon /></Slot></ToolRow>
              <ToolRow $h={24}><Slot $w={23}><MergeIcon /></Slot><Slot $w={14}><Chev /></Slot></ToolRow>
            </GroupColumn>
          </GroupBody>
          <GroupLabel $pr={18}>配置</GroupLabel>
          <LaunchIcon />
        </Group>

        <Group $w={101}>
          <GroupBody $pl={8}>
            <GroupColumn>
              <SelectBox $w={85} $pl={4}>標準<Chev /></SelectBox>
              <ToolRow $h={24} $mt={1}>
                <Slot $w={20}><CurrencyIcon /></Slot>
                <Slot $w={14}><Chev /></Slot>
                <Slot $w={32}><Letter $size={20}>%</Letter></Slot>
                <Slot $w={16}><CommaMark>,</CommaMark></Slot>
              </ToolRow>
              <ToolRow $h={22}>
                <Slot $w={24}><DecimalIcon><TinyArrow />.0<br />.00</DecimalIcon></Slot>
                <Slot $w={24}><DecimalIcon><TinyArrow right />.00<br />.0</DecimalIcon></Slot>
              </ToolRow>
            </GroupColumn>
          </GroupBody>
          <GroupLabel $pr={17}>数値</GroupLabel>
          <LaunchIcon />
        </Group>

        <Group $w={169}>
          <GroupBody $pl={10}>
            <GroupColumn>
              <StyleRow><CondIcon />条件付き書式<Chev /></StyleRow>
              <StyleRow><TableIcon /><Tight $s={-1}>テーブルとして書式設定</Tight><Chev /></StyleRow>
              <StyleRow><StyleIcon /><Tight $s={-1.4}>セルのスタイル</Tight><Chev /></StyleRow>
            </GroupColumn>
          </GroupBody>
          <GroupLabel><Tight $s={-0.8}>スタイル</Tight></GroupLabel>
        </Group>

        <Group $w={85}>
          <GroupBody $pl={10}>
            <GroupColumn>
              <StyleRow><InsertIcon />挿入<Slot $w={22}><Chev /></Slot></StyleRow>
              <StyleRow><DeleteIcon />削除<Slot $w={22}><Chev /></Slot></StyleRow>
              <StyleRow><FormatIcon />書式<Chev /></StyleRow>
            </GroupColumn>
          </GroupBody>
          <GroupLabel>セル</GroupLabel>
        </Group>

        <Group $w={156}>
          <GroupBody $pl={12}>
            <GroupColumn $w={36} $mt={-1}>
              <ToolRow $h={23}><Slot $w={16}><SigmaIcon /></Slot><Slot $w={18}><Chev /></Slot></ToolRow>
              <ToolRow $h={23}><Slot $w={16}><FillDownIcon /></Slot><Slot $w={18}><Chev /></Slot></ToolRow>
              <ToolRow $h={23}><Slot $w={16}><EraserIcon /></Slot><Slot $w={18}><Chev /></Slot></ToolRow>
            </GroupColumn>
            <BigTool $w={58}>
              <BigIcon $h={32}>
                <SortMark>
                  <SortA>A</SortA>
                  <span>Z</span>
                </SortMark>
                <FunnelBox><FunnelIcon /></FunnelBox>
              </BigIcon>
              <BigText $mt={5}><Tight $s={-1.4}>並べ替えと</Tight></BigText>
              <BigText><Tight $s={-2}>フィルター</Tight><Chev /></BigText>
            </BigTool>
            <BigTool $w={46}>
              <BigIcon $h={32}><MagnifierIcon /></BigIcon>
              <BigText $mt={5}><Tight $s={-1.2}>検索と</Tight></BigText>
              <BigText>選択<Chev /></BigText>
            </BigTool>
          </GroupBody>
          <GroupLabel>編集</GroupLabel>
        </Group>

        <Group $w={58}>
          <GroupBody>
            <BigTool $w={57}>
              <BigIcon $h={37}><AnalysisIcon /></BigIcon>
              <BigText><Tight $s={-1}>データ</Tight></BigText>
              <BigText>分析</BigText>
            </BigTool>
          </GroupBody>
          <GroupLabel>分析</GroupLabel>
        </Group>

        <Group $w={58}>
          <GroupBody>
            <BigTool $w={57} $dim>
              <BigIcon $h={37}><SensitivityIcon /></BigIcon>
              <BigText>秘密</BigText>
              <BigText>度<Chev c="#b1b1b1" /></BigText>
            </BigTool>
          </GroupBody>
          <GroupLabel>秘密度</GroupLabel>
        </Group>
        <CollapseIcon />
      </Ribbon>

      <FormulaBar>
        <NameBox>G11<DropTriangle /></NameBox>
        <Dots><DotsIcon /></Dots>
        <FxBox><CancelIcon /><CheckIcon /><FxLabel>fx</FxLabel></FxBox>
        <FormulaInput>●<Chev c="#666" /></FormulaInput>
      </FormulaBar>

      <SheetArea>
        <SheetGrid>
          <Corner><CornerTriangle /></Corner>
          {COLUMNS.map((c, i) => (
            <ColHead key={i} $on={c === "G"}>{c}</ColHead>
          ))}
          {ROWS.map((r) => (
            <React.Fragment key={r}>
              <RowHead $on={r === 11}>{r}</RowHead>
              {COLUMNS.map((_, c) => (
                <SheetCell key={c} row={r} col={c} />
              ))}
            </React.Fragment>
          ))}
        </SheetGrid>
        <VScroll>
          <ScrollButton><ScrollTri d="M0 6h8L4 2z" /></ScrollButton>
          <VThumb />
          <VTrack />
          <ScrollButton><ScrollTri d="M0 2h8L4 6z" /></ScrollButton>
        </VScroll>
      </SheetArea>

      <SheetBar>
        <NavArrows><NavArrow /><NavArrow right /></NavArrows>
        <SheetTab>Sheet1</SheetTab>
        <AddSheet><AddIcon /></AddSheet>
        <HScroll>
          <ScrollButton><ScrollTri d="M6 0v8L2 4z" /></ScrollButton>
          <HThumb />
          <HTrack />
          <ScrollButton><ScrollTri d="M2 0v8l4-4z" /></ScrollButton>
        </HScroll>
      </SheetBar>

      <StatusBar>
        準備完了
        <StatusIcon $ml={20}><MacroIcon /></StatusIcon>
        <StatusIcon $ml={17}>
          <AccessIcon /><Tight $s={-1.1}>アクセシビリティ: 検討が必要です</Tight>
        </StatusIcon>
        <StatusRight>
          <ViewButton $on><ViewNormal /></ViewButton>
          <ViewButton><ViewPage /></ViewButton>
          <ViewButton><ViewBreak /></ViewButton>
          <ZoomSign $ml={4}>−</ZoomSign>
          <ZoomSlider><ZoomThumb /></ZoomSlider>
          <ZoomSign>+</ZoomSign>
          <ZoomValue>100%</ZoomValue>
        </StatusRight>
      </StatusBar>
    </Window>
  );
}
